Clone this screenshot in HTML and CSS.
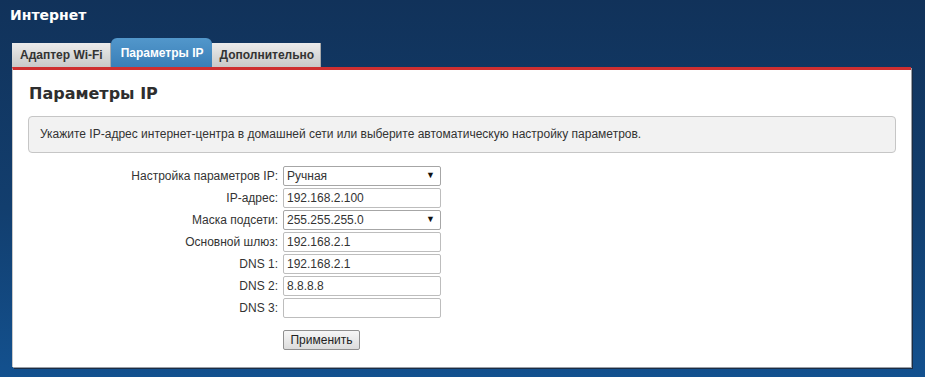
FILE: index.html
```html
<!DOCTYPE html>
<html lang="ru">
<head>
    <meta charset="UTF-8">
    <meta name="viewport" content="width=device-width, initial-scale=1.0">
    <title>Интернет</title>
    <link rel="stylesheet" href="styles.css">
</head>
<body>
    <h1 class="page-title">Интернет</h1>

    <div class="tabs">
        <div class="tab">Адаптер Wi-Fi</div>
        <div class="tab active">Параметры IP</div>
        <div class="tab last">Дополнительно</div>
    </div>

    <div class="panel">
        <h2 class="panel-title">Параметры IP</h2>
        <div class="info">Укажите IP-адрес интернет-центра в домашней сети или выберите автоматическую настройку параметров.</div>

        <form class="settings">
            <label for="mode">Настройка параметров IP:</label>
            <div class="select-wrap">
                <select id="mode"><option>Ручная</option><option>Автоматическая</option></select>
            </div>

            <label for="ip">IP-адрес:</label>
            <input type="text" id="ip" value="192.168.2.100">

            <label for="mask">Маска подсети:</label>
            <div class="select-wrap">
                <select id="mask"><option>255.255.255.0</option></select>
            </div>

            <label for="gw">Основной шлюз:</label>
            <input type="text" id="gw" value="192.168.2.1">

            <label for="dns1">DNS 1:</label>
            <input type="text" id="dns1" value="192.168.2.1">

            <label for="dns2">DNS 2:</label>
            <input type="text" id="dns2" value="8.8.8.8">

            <label for="dns3">DNS 3:</label>
            <input type="text" id="dns3" value="">

            <span></span>
            <div class="actions"><button type="button">Применить</button></div>
        </form>
    </div>
</body>
</html>
```

FILE: styles.css
```css
body {
    margin: 0;
    min-height: 377px;
    font-family: "Liberation Sans", Arial, sans-serif;
    background: linear-gradient(to bottom, #11325a 0%, #123e6e 55%, #13518f 100%);
}

.page-title {
    margin: 0;
    padding: 6px 10px 0;
    font-family: "DejaVu Sans", Verdana, sans-serif;
    font-size: 14px;
    line-height: 18px;
    color: #fff;
    font-weight: bold;
}

.tabs {
    display: flex;
    align-items: flex-end;
    height: 29px;
    margin: 14px 14px 0 12px;
}

.tab {
    height: 24px;
    line-height: 24px;
    padding: 0 8px;
    font-size: 12px;
    font-weight: bold;
    color: #333;
    background: linear-gradient(to bottom, #ebebeb, #c9c9c9);
    box-shadow: inset -1px 0 0 #a9a9a9;
}

.tab.last {
    padding: 0 7px;
}

.tab.active {
    height: 29px;
    line-height: 30px;
    padding: 0 9px 0 10px;
    color: #fff;
    border-radius: 6px 6px 0 0;
    background: linear-gradient(to bottom, #5297cb, #3a7fb8);
    box-shadow: none;
}

.panel {
    margin: 0 14px 0 12px;
    padding: 14px 15px 17px 15px;
    background: #fff;
    border-top: 3px solid #cf2f30;
    border-left: 1px solid #c8c8c8;
    box-shadow: 1px 1px 0 #9aa0a8, 2px 2px 0 #1b2d44;
}

.panel-title {
    margin: 0 0 12px 1px;
    font-family: "DejaVu Sans", Verdana, sans-serif;
    font-size: 16px;
    line-height: 20px;
    font-weight: bold;
    color: #2e2e2e;
}

.info {
    height: 35px;
    line-height: 35px;
    padding: 0 11px;
    font-size: 12px;
    color: #333;
    background: #f2f2f2;
    border: 1px solid #c6c6c6;
    border-radius: 4px;
}

.settings {
    display: grid;
    grid-template-columns: 250px 158px;
    column-gap: 5px;
    row-gap: 2px;
    margin-top: 13px;
    font-size: 12px;
    color: #333;
}

.settings label {
    text-align: right;
    line-height: 20px;
}

.settings input,
.settings select {
    box-sizing: border-box;
    width: 158px;
    height: 20px;
    margin: 0;
    padding: 0 3px;
    font-family: inherit;
    font-size: 12px;
    color: #333;
    background: #fff;
    border: 1px solid #bdbdbd;
    border-radius: 2px;
    outline: none;
}

.settings select {
    appearance: none;
    -webkit-appearance: none;
    border-color: #a6a6a6;
}

.select-wrap {
    position: relative;
    width: 158px;
    height: 20px;
}

.select-wrap::after {
    content: "▼";
    position: absolute;
    right: 6px;
    top: 4px;
    font-size: 9px;
    color: #111;
    pointer-events: none;
}

.actions {
    margin-top: 10px;
}

.actions button {
    width: 77px;
    height: 20px;
    padding: 0;
    font-family: inherit;
    font-size: 12px;
    color: #222;
    background: linear-gradient(to bottom, #f6f6f6, #dcdcdc);
    border: 1px solid #8f8f8f;
    border-radius: 2px;
}
```
